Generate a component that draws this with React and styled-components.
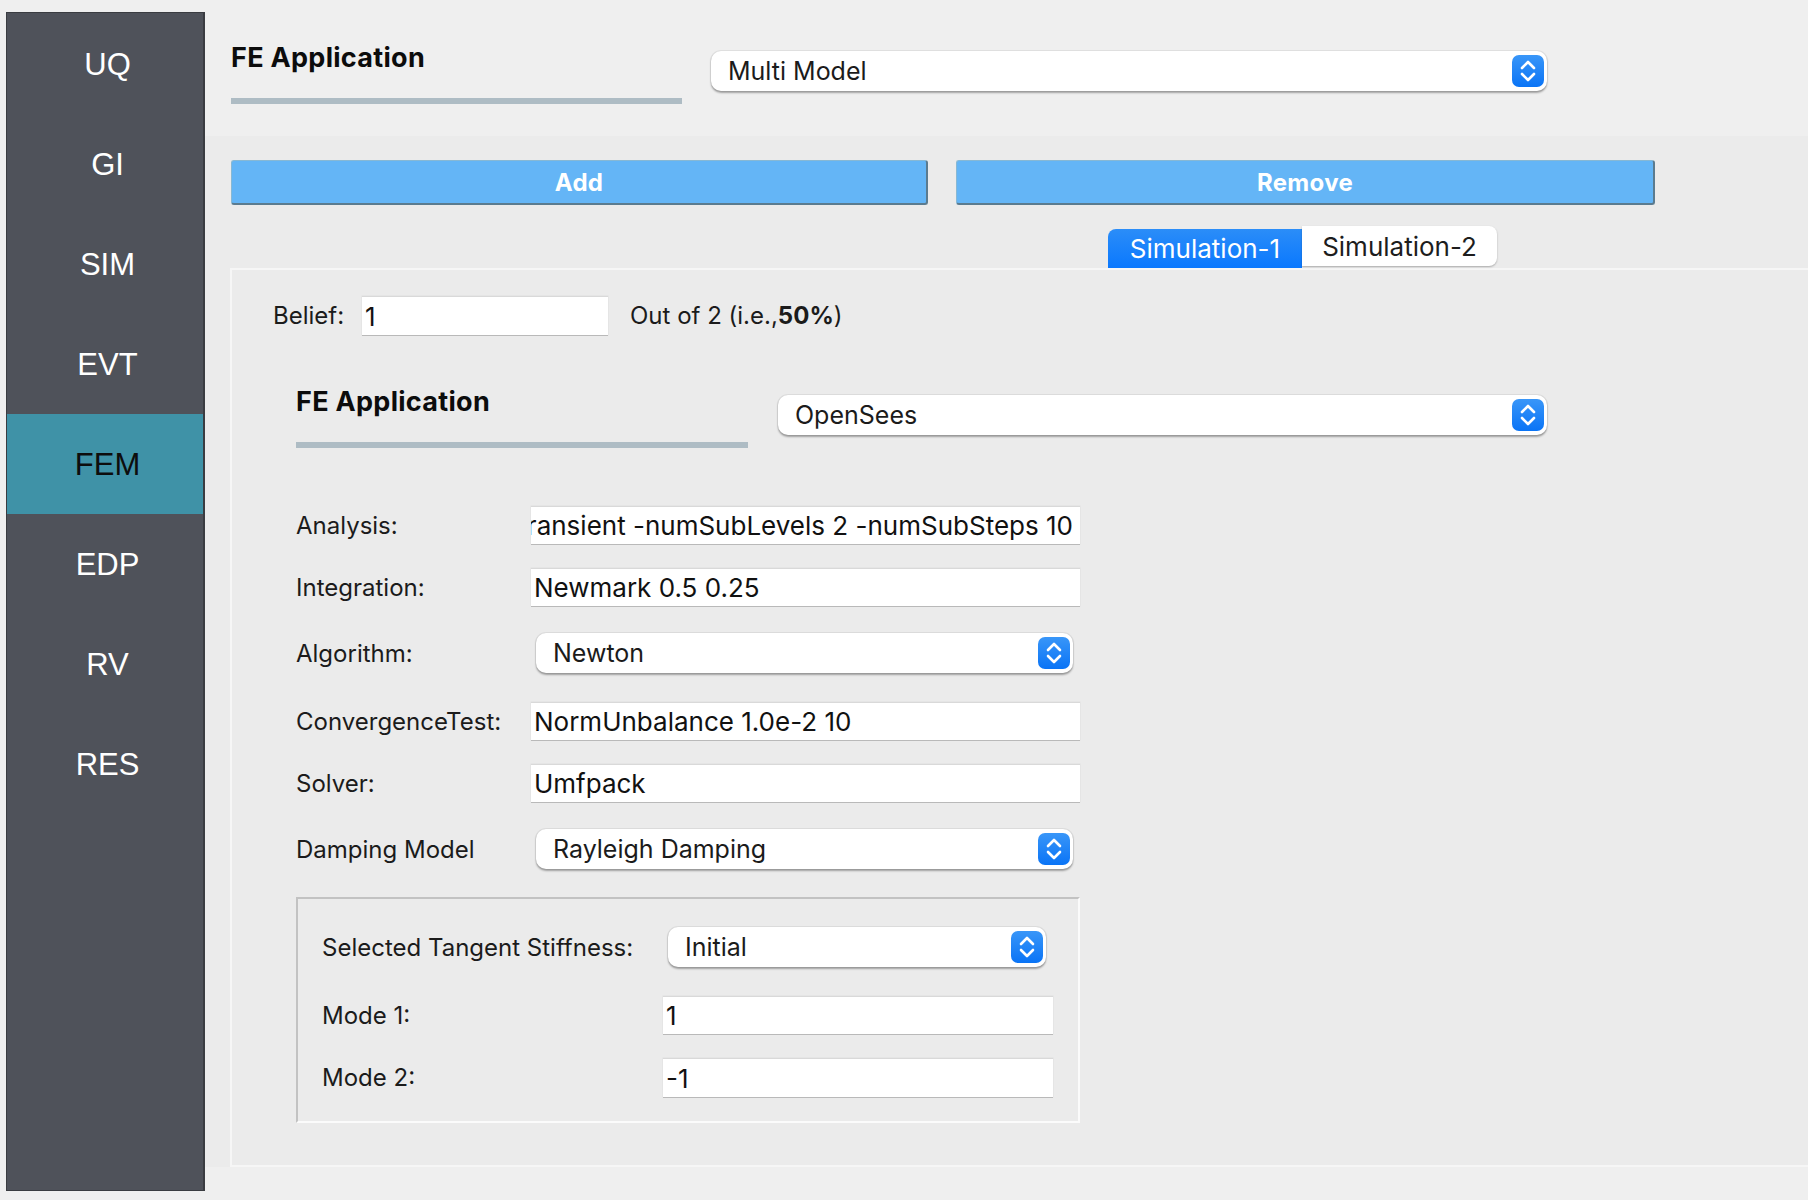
import React from 'react';
import styled, { createGlobalStyle } from 'styled-components';

const GlobalStyle = createGlobalStyle`
  html, body {
    margin: 0;
    padding: 0;
    background: #efefef;
  }
  body {
    font-family: Inter, Roboto, "Liberation Sans", Arial, sans-serif;
    color: #1b1b1b;
  }
  * {
    box-sizing: border-box;
  }
`;

const Window = styled.div`
  display: flex;
  width: 1808px;
  height: 1200px;
  overflow: hidden;
  background: #efefef;
`;

const Sidebar = styled.nav`
  flex: none;
  width: 199px;
  height: 1179px;
  margin: 12px 0 0 6px;
  background: #4f525a;
  border: 1px solid #3a3c41;
  border-right: 2px solid #3a3c41;
  padding-top: 1px;
`;

const NavItem = styled.div`
  height: 100px;
  display: flex;
  align-items: center;
  justify-content: center;
  padding: 2px 0 0 5px;
  font-family: "Liberation Sans", Arial, sans-serif;
  font-size: 31px;
  color: ${p => (p.$active ? '#0d0d0d' : '#ffffff')};
  background: ${p => (p.$active ? '#3f92a7' : 'transparent')};
`;

const Main = styled.main`
  flex: 1;
  min-width: 0;
  display: flex;
  flex-direction: column;
`;

const Header = styled.header`
  height: 136px;
  flex: none;
  display: flex;
  align-items: flex-start;
  padding-left: 26px;
  background: #efefef;
`;

const TitleBlock = styled.div`
  width: ${p => p.$width}px;
  padding-top: ${p => p.$top || 0}px;
  flex: none;
`;

const Title = styled.div`
  font-size: 27px;
  line-height: 30px;
  font-weight: 700;
  letter-spacing: 0.3px;
  color: #0c0c0c;
`;

const Underline = styled.div`
  height: 6px;
  margin-top: 25px;
  background: #aebcc4;
`;

const ComboBox = styled.div`
  flex: none;
  width: ${p => p.$width}px;
  height: 40px;
  margin: ${p => p.$margin || '0'};
  display: flex;
  align-items: center;
  justify-content: space-between;
  padding: 0 3px 0 17px;
  background: #ffffff;
  border-radius: 10px;
  box-shadow: 0 0 0 1px rgba(0, 0, 0, 0.05), 0 1.5px 2px rgba(0, 0, 0, 0.32);
  font-size: 25px;
  color: #1b1b1b;
`;

const Stepper = styled.div`
  width: 32px;
  height: 32px;
  border-radius: 7px;
  background: linear-gradient(#3996f8, #0a74f6);
  display: flex;
  align-items: center;
  justify-content: center;
`;

const Content = styled.section`
  background: #ebebeb;
  padding: 24px 0 0 25px;
`;

const ButtonRow = styled.div`
  display: flex;
  gap: 28px;
  padding-left: 1px;
`;

const ActionButton = styled.button`
  width: ${p => p.$width}px;
  height: 45px;
  background: #64b5f6;
  border: 1px solid;
  border-color: #87b8d4 #5b7b8f #5b7b8f #87b8d4;
  border-bottom-width: 2px;
  border-right-width: 2px;
  border-radius: 3px;
  color: #ffffff;
  font-family: Inter, Roboto, "Liberation Sans", Arial, sans-serif;
  font-size: 24px;
  font-weight: 700;
  letter-spacing: 0.3px;
  padding: 0;
`;

const TabBar = styled.div`
  display: flex;
  align-items: flex-start;
  height: 42px;
  margin: 21px 0 0 878px;
`;

const Tab = styled.div`
  height: ${p => (p.$active ? 39 : 40)}px;
  margin-top: ${p => (p.$active ? 3 : 0)}px;
  width: ${p => p.$width}px;
  display: flex;
  align-items: center;
  justify-content: center;
  font-size: 26px;
  color: ${p => (p.$active ? '#ffffff' : '#1d1d1d')};
  background: ${p => (p.$active ? 'linear-gradient(#2b8df8, #0a78fe)' : '#ffffff')};
  border-radius: ${p => (p.$active ? '8px 0 0 0' : '0 8px 8px 0')};
  box-shadow: ${p => (p.$active ? 'none' : '0 1px 2px rgba(0,0,0,0.28)')};
`;

const Pane = styled.div`
  margin-right: -40px;
  border: 2px solid #f6f6f6;
  border-right: none;
  padding: 26px 0 42px 41px;
`;

const BeliefRow = styled.div`
  display: flex;
  align-items: center;
`;

const Field = styled.div`
  flex: none;
  width: ${p => p.$width}px;
  height: ${p => p.$height || 38}px;
  display: flex;
  align-items: center;
  justify-content: ${p => (p.$end ? 'flex-end' : 'flex-start')};
  overflow: hidden;
  white-space: nowrap;
  padding: 0 ${p => (p.$end ? 7 : 3)}px 0 3px;
  background: #ffffff;
  border-top: 1px solid #d9d9d9;
  box-shadow: 0 1px 0 #b9b9b9, 0 0 0 0.5px #e0e0e0;
  font-size: 26px;
  color: #111111;
`;

const Label = styled.div`
  flex: none;
  width: ${p => (p.$width ? `${p.$width}px` : 'auto')};
  font-size: 24px;
  color: #1b1b1b;
  white-space: nowrap;
`;

const Note = styled.div`
  margin-left: 22px;
  font-size: 24px;
  b {
    font-weight: 700;
  }
`;

const Section = styled.div`
  margin-left: 23px;
`;

const SubHeader = styled(Section)`
  display: flex;
  align-items: flex-start;
  margin-top: 52px;
`;

const Form = styled(Section)`
  display: flex;
  flex-direction: column;
  gap: 24px;
  margin-top: 58px;
  width: 784px;
`;

const Row = styled.div`
  display: flex;
  align-items: center;
  margin: ${p => (p.$combo ? '3px 0 5px' : '0')};
`;

const GroupBox = styled.div`
  display: flex;
  flex-direction: column;
  gap: 24px;
  margin-top: 23px;
  width: 784px;
  border: 2px solid;
  border-color: #c2c2c2 #fbfbfb #fbfbfb #c2c2c2;
  padding: 28px 25px 24px 24px;
`;

const GroupRow = styled.div`
  display: flex;
  align-items: center;
  margin-bottom: ${p => (p.$combo ? 5 : 0)}px;
`;

function Chevrons() {
  return (
    <svg width="32" height="32" viewBox="0 0 32 32" fill="none">
      <path d="M10 13 L16 7 L22 13" stroke="#fff" strokeWidth="2.6" strokeLinecap="round" strokeLinejoin="round" />
      <path d="M10 19 L16 25 L22 19" stroke="#fff" strokeWidth="2.6" strokeLinecap="round" strokeLinejoin="round" />
    </svg>
  );
}

function Select({ value, width, margin }) {
  return (
    <ComboBox $width={width} $margin={margin}>
      <span>{value}</span>
      <Stepper>
        <Chevrons />
      </Stepper>
    </ComboBox>
  );
}

const navItems = ['UQ', 'GI', 'SIM', 'EVT', 'FEM', 'EDP', 'RV', 'RES'];

export default function App() {
  return (
    <>
      <GlobalStyle />
      <Window>
        <Sidebar>
          {navItems.map(item => (
            <NavItem key={item} $active={item === 'FEM'}>
              {item}
            </NavItem>
          ))}
        </Sidebar>
        <Main>
          <Header>
            <TitleBlock $width={451} $top={43}>
              <Title>FE Application</Title>
              <Underline />
            </TitleBlock>
            <Select value="Multi Model" width={836} margin="51px 0 0 29px" />
          </Header>
          <Content>
            <ButtonRow>
              <ActionButton $width={697}>Add</ActionButton>
              <ActionButton $width={699}>Remove</ActionButton>
            </ButtonRow>
            <TabBar>
              <Tab $active $width={194}>Simulation-1</Tab>
              <Tab $width={195}>Simulation-2</Tab>
            </TabBar>
            <Pane>
              <BeliefRow>
                <Label $width={89}>Belief:</Label>
                <Field $width={246} $height={39}>1</Field>
                <Note>
                  Out of 2 (i.e.,<b>50%</b>)
                </Note>
              </BeliefRow>
              <SubHeader>
                <TitleBlock $width={452}>
                  <Title>FE Application</Title>
                  <Underline />
                </TitleBlock>
                <Select value="OpenSees" width={769} margin="8px 0 0 30px" />
              </SubHeader>
              <Form>
                <Row>
                  <Label $width={235}>Analysis:</Label>
                  <Field $width={549} $end>
                    Transient -numSubLevels 2 -numSubSteps 10
                  </Field>
                </Row>
                <Row>
                  <Label $width={235}>Integration:</Label>
                  <Field $width={549}>Newmark 0.5 0.25</Field>
                </Row>
                <Row $combo>
                  <Label $width={240}>Algorithm:</Label>
                  <Select value="Newton" width={537} />
                </Row>
                <Row>
                  <Label $width={235}>ConvergenceTest:</Label>
                  <Field $width={549}>NormUnbalance 1.0e-2 10</Field>
                </Row>
                <Row>
                  <Label $width={235}>Solver:</Label>
                  <Field $width={549}>Umfpack</Field>
                </Row>
                <Row $combo>
                  <Label $width={240}>Damping Model</Label>
                  <Select value="Rayleigh Damping" width={537} />
                </Row>
              </Form>
              <Section>
                <GroupBox>
                  <GroupRow $combo>
                    <Label $width={346}>Selected Tangent Stiffness:</Label>
                    <Select value="Initial" width={378} />
                  </GroupRow>
                  <GroupRow>
                    <Label $width={341}>Mode 1:</Label>
                    <Field $width={390}>1</Field>
                  </GroupRow>
                  <GroupRow>
                    <Label $width={341}>Mode 2:</Label>
                    <Field $width={390} $height={39}>-1</Field>
                  </GroupRow>
                </GroupBox>
              </Section>
            </Pane>
          </Content>
        </Main>
      </Window>
    </>
  );
}
